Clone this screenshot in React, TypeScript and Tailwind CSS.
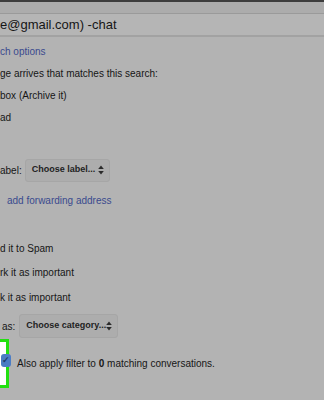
function Arrows() {
  return (
    <svg width="6" height="10" viewBox="0 0 6 10" className="shrink-0">
      <path d="M3 0.5 L5.8 4 L0.2 4 Z" fill="#2a2a2a" />
      <path d="M3 9.5 L5.8 6 L0.2 6 Z" fill="#2a2a2a" />
    </svg>
  );
}

export default function App() {
  const row = "h-[22px] flex items-center text-[10px] text-[#161616] whitespace-nowrap";
  return (
    <main
      className="w-[324px] h-[400px] overflow-hidden bg-[#b3b3b3] flex flex-col"
      style={{ fontFamily: '"Liberation Sans", Arial, sans-serif' }}
    >
      <div className="h-[2px] bg-[#3d3d3d]" />
      <div className="h-[12px] bg-[#acacac] border-b border-[#9a9a9a]" />
      <div className="h-[23px] bg-[#b5b5b5] border-b-2 border-[#a2a2a2] flex items-center text-[13px] text-[#161616] leading-none">
        e@gmail.com) -chat
      </div>

      <div className="flex flex-col pt-[3px]">
        <div className={row}>
          <span className="text-[#3a4a8e]">ch options</span>
        </div>
        <div className={row}>ge arrives that matches this search:</div>
        <div className={row}>box (Archive it)</div>
        <div className={row}>ad</div>

        <div className="h-[30px]" />

        <div className="h-[24px] flex items-center gap-[3px] text-[10px] text-[#161616] whitespace-nowrap">
          <span>abel:</span>
          <div className="w-[85px] h-[23px] rounded-[3px] border border-[#a6a6a6] bg-[#adadad] flex items-center justify-between pl-[6px] pr-[5px] text-[9px] font-bold text-[#222]">
            <span>Choose label...</span>
            <Arrows />
          </div>
        </div>

        <div className="h-[12px]" />
        <div className="h-[12px] flex items-center pl-[7px] text-[10px] text-[#3a4a8e] whitespace-nowrap">
          add forwarding address
        </div>

        <div className="h-[31px]" />
        <div className={row}>d it to Spam</div>
        <div className="h-[2px]" />
        <div className={row}>rk it as important</div>
        <div className="h-[3px]" />
        <div className={row}>k it as important</div>

        <div className="h-[6px]" />
        <div className="h-[24px] flex items-center gap-[4px] pl-[2px] text-[10px] text-[#161616] whitespace-nowrap">
          <span>as:</span>
          <div className="w-[99px] h-[24px] rounded-[3px] border border-[#a6a6a6] bg-[#adadad] flex items-center justify-between pl-[6px] pr-[5px] text-[9px] font-bold text-[#222]">
            <span>Choose category...</span>
            <Arrows />
          </div>
        </div>

        <div className="h-[1px]" />
        <div className="flex items-center h-[49px]">
          <div className="relative w-[9px] h-[49px] bg-white border-[3px] border-l-0 border-[#22e011]">
            <div className="absolute left-[1px] top-[12px] w-[10px] h-[13px] rounded-[3px] bg-[#4a7cc4] flex items-center justify-center text-[9px] text-[#1d3a6a] font-bold">
              ✓
            </div>
          </div>
          <span className="ml-[8px] text-[10px] text-[#161616] whitespace-nowrap">
            Also apply filter to <b>0</b> matching conversations.
          </span>
        </div>
      </div>
    </main>
  );
}
